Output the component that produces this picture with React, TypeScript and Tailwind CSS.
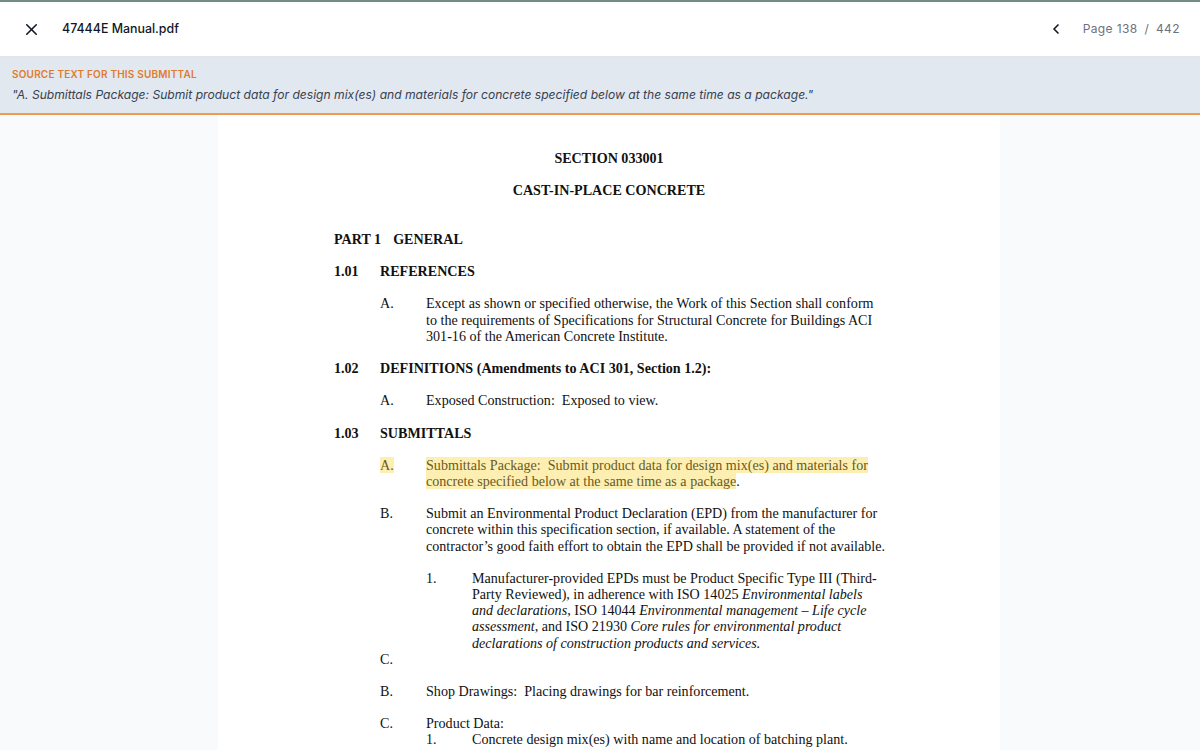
import { X, ChevronLeft } from "lucide-react";

const serif = { fontFamily: '"Liberation Serif", "Times New Roman", serif' };

function Row({
  num,
  label,
  indent = 0,
  className = "",
}: {
  num?: string;
  label: React.ReactNode;
  indent?: number;
  className?: string;
}) {
  return (
    <div className={`flex ${className}`} style={{ paddingLeft: indent }}>
      <div className="w-[46px] shrink-0">{num}</div>
      <div className="flex-1">{label}</div>
    </div>
  );
}

function Lines({ lines }: { lines: React.ReactNode[] }) {
  return (
    <>
      {lines.map((l, i) => (
        <div key={i} className="whitespace-pre">
          {l}
        </div>
      ))}
    </>
  );
}

export default function App() {
  return (
    <div
      className="flex h-[750px] w-[1200px] flex-col overflow-hidden bg-white"
      style={{ fontFamily: 'Inter, "Noto Sans", sans-serif' }}
    >
      {/* Top header */}
      <header className="flex h-[57px] shrink-0 items-center border-t-2 border-b border-t-[#6f8f86] border-b-[#e2e6ea] bg-white pl-[22px] pr-[20px]">
        <X className="h-[19px] w-[19px] text-gray-900" strokeWidth={2} />
        <span className="ml-[21px] text-[12.4px] font-medium text-gray-900">47444E Manual.pdf</span>
        <div className="ml-auto flex items-center">
          <ChevronLeft className="h-[16px] w-[16px] text-gray-900" strokeWidth={2.5} />
          <span className="ml-[19px] text-[12px] tracking-[0.4px] text-[#6b7280]">
            Page 138 <span className="mx-[3px]">/</span> 442
          </span>
        </div>
      </header>

      {/* Source banner */}
      <div className="flex h-[58px] shrink-0 flex-col justify-center border-b-2 border-[#ef9a4d] bg-[#e2e8f0] px-[12px] pt-[2px]">
        <div className="text-[10px] font-semibold tracking-[0.2px] text-[#e07b2e]">
          SOURCE TEXT FOR THIS SUBMITTAL
        </div>
        <div className="mt-[4px] text-[12.1px] italic text-[#374151]">
          "A. Submittals Package: Submit product data for design mix(es) and materials for concrete specified below at the same time as a package."
        </div>
      </div>

      {/* Document area */}
      <div className="flex flex-1 justify-center overflow-hidden bg-[#f8fafc] pl-[18px]">
        <div
          className="w-[782px] bg-white pt-[35px] pl-[116px] pr-[116px] text-[14.1px] leading-[16.15px] text-[#111]"
          style={serif}
        >
          <div className="text-center font-bold">SECTION 033001</div>
          <div className="mt-[16.15px] text-center font-bold">CAST-IN-PLACE CONCRETE</div>

          <div className="mt-[32.3px] font-bold">
            PART 1<span className="ml-[12px]">GENERAL</span>
          </div>

          <Row num="1.01" label="REFERENCES" className="mt-[16.15px] font-bold" />

          <Row
            indent={46}
            num="A."
            className="mt-[16.15px]"
            label={
              <Lines
                lines={[
                  "Except as shown or specified otherwise, the Work of this Section shall conform",
                  "to the requirements of Specifications for Structural Concrete for Buildings ACI",
                  "301-16 of the American Concrete Institute.",
                ]}
              />
            }
          />

          <Row
            num="1.02"
            className="mt-[16.15px] font-bold"
            label="DEFINITIONS (Amendments to ACI 301, Section 1.2):"
          />

          <Row
            indent={46}
            num="A."
            className="mt-[16.15px]"
            label={<Lines lines={["Exposed Construction:  Exposed to view."]} />}
          />

          <Row num="1.03" className="mt-[16.15px] font-bold" label="SUBMITTALS" />

          <div className="mt-[16.15px] flex pl-[46px]">
            <div className="w-[46px] shrink-0">
              <span className="bg-[#fdefb2] text-[#6b5a1f]">A.</span>
            </div>
            <div className="flex-1">
              <div className="whitespace-pre">
                <span className="bg-[#fdefb2] text-[#6b5a1f]">
                  Submittals Package:  Submit product data for design mix(es) and materials for
                </span>
              </div>
              <div className="whitespace-pre">
                <span className="bg-[#fdefb2] text-[#6b5a1f]">concrete specified below at the same time as a package</span>.
              </div>
            </div>
          </div>

          <Row
            indent={46}
            num="B."
            className="mt-[16.15px]"
            label={
              <Lines
                lines={[
                  "Submit an Environmental Product Declaration (EPD) from the manufacturer for",
                  "concrete within this specification section, if available. A statement of the",
                  "contractor’s good faith effort to obtain the EPD shall be provided if not available.",
                ]}
              />
            }
          />

          <Row
            indent={92}
            num="1."
            className="mt-[16.15px]"
            label={
              <Lines
                lines={[
                  "Manufacturer-provided EPDs must be Product Specific Type III (Third-",
                  <>
                    Party Reviewed), in adherence with ISO 14025 <i>Environmental labels</i>
                  </>,
                  <>
                    <i>and declarations</i>, ISO 14044 <i>Environmental management – Life cycle</i>
                  </>,
                  <>
                    <i>assessment</i>, and ISO 21930 <i>Core rules for environmental product</i>
                  </>,
                  <i>declarations of construction products and services.</i>,
                ]}
              />
            }
          />

          <Row indent={46} num="C." label="" />

          <Row
            indent={46}
            num="B."
            className="mt-[16.15px]"
            label={<Lines lines={["Shop Drawings:  Placing drawings for bar reinforcement."]} />}
          />

          <Row indent={46} num="C." className="mt-[16.15px]" label="Product Data:" />
          <Row indent={92} num="1." label="Concrete design mix(es) with name and location of batching plant." />
        </div>
      </div>
    </div>
  );
}
